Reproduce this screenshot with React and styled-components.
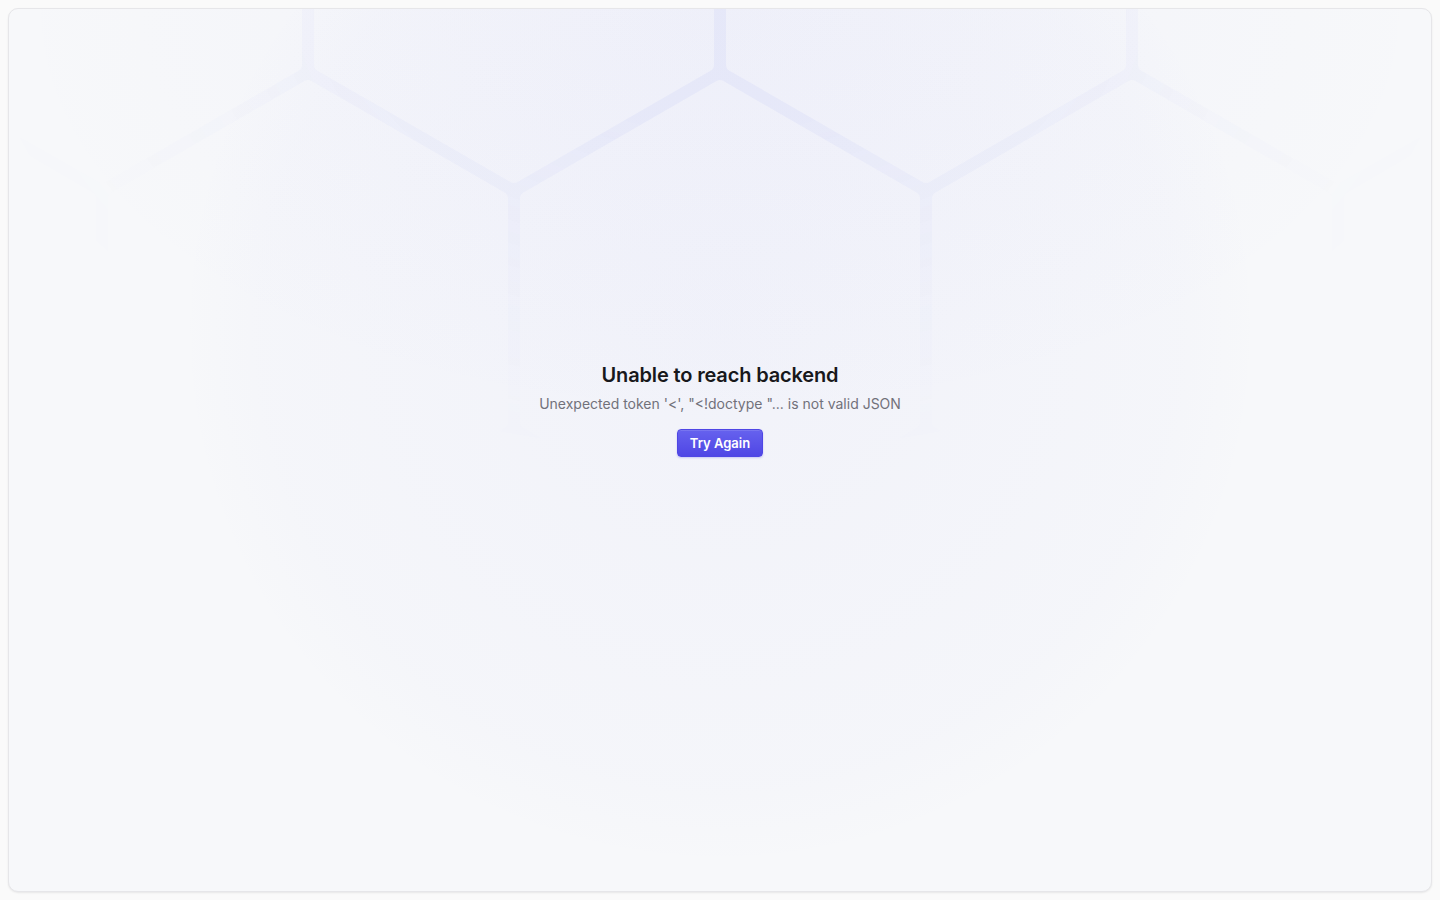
import React from "react";
import styled, { createGlobalStyle } from "styled-components";

const Global = createGlobalStyle`
  html, body { margin: 0; padding: 0; background: #fafafa; }
  body { font-family: Inter, "Noto Sans", "Liberation Sans", sans-serif; -webkit-font-smoothing: antialiased; }
  #root { min-height: 100vh; }
`;

const Page = styled.div`
  height: 100vh;
  box-sizing: border-box;
  padding: 8px;
  display: flex;
`;

const Card = styled.main`
  position: relative;
  flex: 1;
  overflow: hidden;
  border: 1px solid #e6e6e9;
  border-radius: 10px;
  box-shadow: 0 1px 2px rgba(0, 0, 0, 0.08);
  background:
    radial-gradient(ellipse 720px 420px at 50% 0%, rgba(99, 102, 241, 0.035), rgba(99, 102, 241, 0) 100%),
    radial-gradient(circle 540px at 50% 36%, rgba(99, 102, 241, 0.04), rgba(99, 102, 241, 0.015) 85%, rgba(99, 102, 241, 0) 100%),
    #f7f8fa;
  display: flex;
  align-items: center;
  justify-content: center;
  padding-bottom: 82px;
  box-sizing: border-box;
`;

const Pattern = styled.svg`
  position: absolute;
  inset: 0;
  width: 100%;
  height: 100%;
  pointer-events: none;
  -webkit-mask-image: radial-gradient(ellipse 760px 460px at 50% 0%, #000 25%, rgba(0,0,0,0.35) 65%, transparent 100%);
  mask-image: radial-gradient(ellipse 760px 460px at 50% 0%, #000 25%, rgba(0,0,0,0.35) 65%, transparent 100%);
`;

const Content = styled.div`
  position: relative;
  display: flex;
  flex-direction: column;
  align-items: center;
  text-align: center;
`;

const Title = styled.h1`
  margin: 0;
  font-size: 20px;
  line-height: 28px;
  font-weight: 600;
  color: #18181b;
  letter-spacing: -0.15px;
`;

const Message = styled.p`
  margin: 5px 0 0;
  font-size: 14px;
  line-height: 20px;
  color: #71717a;
`;

const Button = styled.button`
  margin-top: 15px;
  height: 28px;
  padding: 0 12px;
  border: 1px solid #4f46e5;
  border-radius: 4px;
  background: linear-gradient(180deg, #6662ee 0%, #4f46e5 100%);
  box-shadow: inset 0 1px 0 rgba(255, 255, 255, 0.12), 0 1px 2px rgba(79, 70, 229, 0.25);
  color: #fff;
  font-family: inherit;
  font-size: 13px;
  font-weight: 600;
  cursor: pointer;
`;

const S = 412 / Math.sqrt(3);

function hexPoints(cx, cy, apothem) {
  const R = (apothem * 2) / Math.sqrt(3);
  const pts = [];
  for (let i = 0; i < 6; i++) {
    const a = (Math.PI / 180) * (60 * i - 90);
    pts.push(`${(cx + R * Math.cos(a)).toFixed(2)},${(cy + R * Math.sin(a)).toFixed(2)}`);
  }
  return pts.join(" ");
}

function Honeycomb() {
  const centers = [];
  for (let k = -1; k <= 2; k++) {
    const cy = 301 + k * 1.5 * S;
    const off = k % 2 !== 0 ? 206 : 0;
    for (let j = -3; j <= 3; j++) {
      centers.push([711 + j * 412 + off, cy]);
    }
  }
  const r = 7;
  const apothem = 206 - 6 - r;
  return (
    <Pattern aria-hidden="true">
      <defs>
        <mask id="gaps" maskUnits="userSpaceOnUse" x="0" y="0" width="1440" height="900">
          <rect x="0" y="0" width="1440" height="900" fill="#fff" />
          {centers.map(([x, y], i) => (
            <polygon
              key={i}
              points={hexPoints(x, y, apothem)}
              fill="#000"
              stroke="#000"
              strokeWidth={r * 2}
              strokeLinejoin="round"
            />
          ))}
        </mask>
      </defs>
      <rect x="0" y="0" width="1440" height="900" fill="rgba(99,102,241,0.055)" mask="url(#gaps)" />
    </Pattern>
  );
}

export default function App() {
  return (
    <>
      <Global />
      <Page>
        <Card>
          <Honeycomb />
          <Content>
            <Title>Unable to reach backend</Title>
            <Message>Unexpected token '&lt;', "&lt;!doctype "... is not valid JSON</Message>
            <Button type="button">Try Again</Button>
          </Content>
        </Card>
      </Page>
    </>
  );
}
